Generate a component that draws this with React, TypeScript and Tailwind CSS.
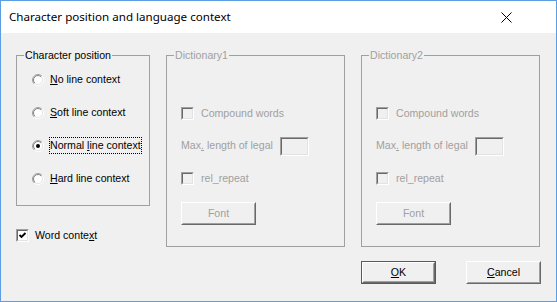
import type { ReactNode } from "react";

function Radio({ checked }: { checked?: boolean }) {
  return (
    <svg width="12" height="12" viewBox="0 0 12 12" className="shrink-0">
      <defs>
        <linearGradient id="radio-outer" x1="0" y1="0" x2="1" y2="1">
          <stop offset="0.5" stopColor="#a0a0a0" />
          <stop offset="0.5" stopColor="#ffffff" />
        </linearGradient>
        <linearGradient id="radio-inner" x1="0" y1="0" x2="1" y2="1">
          <stop offset="0.5" stopColor="#808080" />
          <stop offset="0.5" stopColor="#e3e3e3" />
        </linearGradient>
      </defs>
      <circle cx="6" cy="6" r="5.5" fill="none" stroke="url(#radio-outer)" />
      <circle cx="6" cy="6" r="4.5" fill="#ffffff" stroke="url(#radio-inner)" />
      {checked && <circle cx="6" cy="6" r="2" fill="#000000" />}
    </svg>
  );
}

function Check({ checked, disabled }: { checked?: boolean; disabled?: boolean }) {
  return (
    <span className="flex h-[13px] w-[13px] shrink-0 border border-t-[#a0a0a0] border-l-[#a0a0a0] border-r-white border-b-white">
      <span
        className={`flex flex-1 items-center justify-center border border-t-[#696969] border-l-[#696969] border-r-[#e3e3e3] border-b-[#e3e3e3] ${
          disabled ? "bg-[#f0f0f0]" : "bg-white"
        }`}
      >
        {checked && (
          <svg width="9" height="9" viewBox="0 0 9 9">
            <polyline points="1.5,4 3.5,6 7.5,2" fill="none" stroke="#000" strokeWidth="1.8" />
          </svg>
        )}
      </span>
    </span>
  );
}

function Button({
  children,
  isDefault,
  disabled,
}: {
  children: ReactNode;
  isDefault?: boolean;
  disabled?: boolean;
}) {
  return (
    <span
      className={`flex h-[23px] w-[75px] bg-[#f0f0f0] ${
        isDefault ? "border border-[#5a5a5a]" : ""
      }`}
    >
      <span className="flex flex-1 border border-t-white border-l-white border-r-[#696969] border-b-[#696969]">
        <span
          className={`flex flex-1 items-center justify-center border border-t-[#f0f0f0] border-l-[#f0f0f0] border-r-[#a0a0a0] border-b-[#a0a0a0] ${
            disabled ? "text-[#a0a0a0]" : "text-black"
          }`}
        >
          {children}
        </span>
      </span>
    </span>
  );
}

function Group({
  title,
  disabled,
  className,
  children,
}: {
  title: string;
  disabled?: boolean;
  className: string;
  children: ReactNode;
}) {
  return (
    <fieldset className={`border border-[#a0a0a0] ${className}`}>
      <legend className={`ml-[7px] px-[1px] ${disabled ? "text-[#a0a0a0]" : "text-black"}`}>
        {title}
      </legend>
      {children}
    </fieldset>
  );
}

const POSITIONS = [
  { before: "", key: "N", after: "o line context" },
  { before: "", key: "S", after: "oft line context" },
  { before: "Normal ", key: "l", after: "ine context", checked: true },
  { before: "", key: "H", after: "ard line context" },
];

function Dictionary({ title }: { title: string }) {
  return (
    <Group title={title} disabled className="h-[198px] w-[179px]">
      <div className="flex flex-col pl-[14px] text-[#a0a0a0]">
        <div className="mt-[45px] flex h-[13px] items-center gap-[7px]">
          <Check disabled />
          <span>Compound words</span>
        </div>
        <div className="mt-[17px] flex h-[19px] items-center gap-[7px]">
          <span className="pb-[3px]">
            Max<u>.</u> length of legal
          </span>
          <span className="flex h-[19px] w-[29px] border border-t-[#a0a0a0] border-l-[#a0a0a0] border-r-white border-b-white">
            <span className="flex-1 border border-t-[#696969] border-l-[#696969] border-r-[#e3e3e3] border-b-[#e3e3e3] bg-[#f0f0f0]" />
          </span>
        </div>
        <div className="mt-[16px] flex h-[13px] items-center gap-[7px]">
          <Check disabled />
          <span>rel_repeat</span>
        </div>
        <div className="mt-[17px]">
          <Button disabled>Font</Button>
        </div>
      </div>
    </Group>
  );
}

export default function App() {
  return (
    <div className="flex h-[302px] w-[557px] flex-col border border-[#5c9de3] bg-[#f0f0f0] font-['Liberation_Sans',Arial,sans-serif] text-[10.6px] leading-[13px] text-black">
      <div className="flex h-[32px] shrink-0 items-center bg-white pl-[8px]">
        <span className="font-['Noto_Sans',sans-serif] text-[11.6px] leading-[18px]">
          Character position and language context
        </span>
        <svg width="11" height="11" viewBox="0 0 11 11" className="ml-auto mr-[44px]">
          <path d="M0.5 0.5 L10.5 10.5 M10.5 0.5 L0.5 10.5" stroke="#000" strokeWidth="1" />
        </svg>
      </div>

      <div className="flex gap-[16px] pl-[15px] pt-[16px]">
        <div className="flex w-[134px] flex-col">
          <Group title="Character position" className="h-[157px] w-[134px]">
            <div className="flex flex-col gap-[16px] pl-[15px] pt-[9px]">
              {POSITIONS.map((p) => (
                <div key={p.key} className="flex h-[17px] items-center gap-[5px]">
                  <Radio checked={p.checked} />
                  <span
                    className={`border leading-[15px] ${
                      p.checked ? "border-dotted border-black" : "border-transparent"
                    }`}
                  >
                    {p.before}
                    <u>{p.key}</u>
                    {p.after}
                  </span>
                </div>
              ))}
            </div>
          </Group>
          <div className="mt-[23px] flex h-[13px] items-center gap-[6px]">
            <Check checked />
            <span>
              Word conte<u>x</u>t
            </span>
          </div>
        </div>

        <Dictionary title="Dictionary1" />

        <div className="flex w-[180px] flex-col">
          <Dictionary title="Dictionary2" />
          <div className="mt-[14px] flex justify-between">
            <Button isDefault>
              <u>O</u>K
            </Button>
            <Button>
              <u>C</u>ancel
            </Button>
          </div>
        </div>
      </div>
    </div>
  );
}
